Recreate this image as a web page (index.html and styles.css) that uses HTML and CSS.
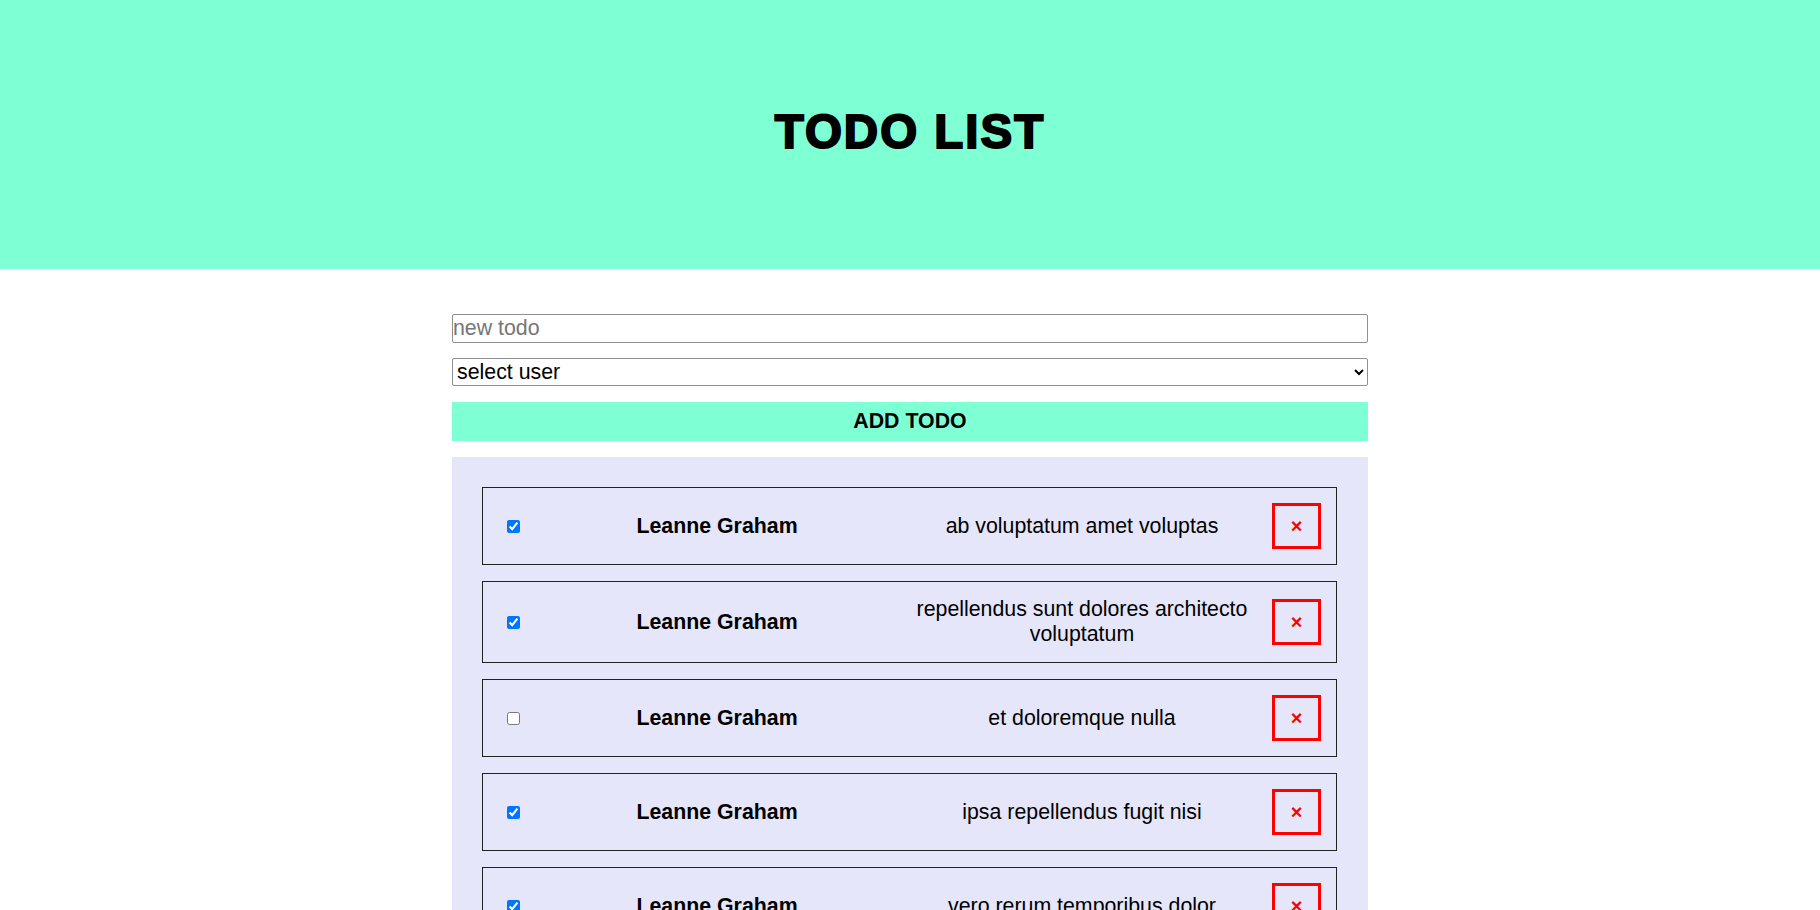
FILE: index.html
```html
<!DOCTYPE html>
<html lang="en">
<head>
<meta charset="utf-8">
<title>Todo List</title>
<link rel="stylesheet" href="styles.css">
</head>
<body>
<header class="header">
  <h1 class="title">TODO LIST</h1>
</header>
<main class="main">
  <form class="form">
    <input class="new-todo" type="text" placeholder="new todo">
    <select class="user-select">
      <option>select user</option>
      <option>Leanne Graham</option>
    </select>
    <button class="add-btn" type="button">ADD TODO</button>
  </form>
  <ul class="list">
    <li class="item">
      <span class="check-cell"><input type="checkbox" checked></span>
      <span class="name">Leanne Graham</span>
      <span class="text">ab voluptatum amet voluptas</span>
      <span class="del-cell"><button class="del" type="button">×</button></span>
    </li>
    <li class="item">
      <span class="check-cell"><input type="checkbox" checked></span>
      <span class="name">Leanne Graham</span>
      <span class="text">repellendus sunt dolores architecto voluptatum</span>
      <span class="del-cell"><button class="del" type="button">×</button></span>
    </li>
    <li class="item">
      <span class="check-cell"><input type="checkbox"></span>
      <span class="name">Leanne Graham</span>
      <span class="text">et doloremque nulla</span>
      <span class="del-cell"><button class="del" type="button">×</button></span>
    </li>
    <li class="item">
      <span class="check-cell"><input type="checkbox" checked></span>
      <span class="name">Leanne Graham</span>
      <span class="text">ipsa repellendus fugit nisi</span>
      <span class="del-cell"><button class="del" type="button">×</button></span>
    </li>
    <li class="item">
      <span class="check-cell"><input type="checkbox" checked></span>
      <span class="name">Leanne Graham</span>
      <span class="text">vero rerum temporibus dolor</span>
      <span class="del-cell"><button class="del" type="button">×</button></span>
    </li>
  </ul>
</main>
</body>
</html>
```
FILE: styles.css
```css
html {
  overflow: hidden;
}
body {
  margin: 0;
  font-family: "Liberation Sans", Arial, sans-serif;
  background: #ffffff;
  color: #000;
}
.header {
  height: 269px;
  background: #7fffd4;
  display: flex;
  align-items: center;
  justify-content: center;
  padding-bottom: 6px;
  box-sizing: border-box;
}
.title {
  margin: 0;
  font-size: 47.5px;
  font-weight: 700;
  letter-spacing: 2px;
  -webkit-text-stroke: 2px #000;
}
.main {
  width: 916px;
  margin: 45px auto 0;
}
.form {
  display: flex;
  flex-direction: column;
  gap: 15px;
}
.new-todo {
  box-sizing: border-box;
  width: 100%;
  height: 29px;
  margin: 0;
  padding: 1px 0;
  font-family: "Liberation Sans", Arial, sans-serif;
  font-size: 21.33px;
  border: 1px solid #8f8f8f;
  border-radius: 2px;
}
.new-todo::placeholder {
  color: #767676;
}
.user-select {
  box-sizing: border-box;
  width: 100%;
  height: 28px;
  margin: 0;
  font-family: "Liberation Sans", Arial, sans-serif;
  font-size: 21.33px;
  border: 1px solid #8f8f8f;
  border-radius: 2px;
  background: #fff;
  color: #000;
}
.add-btn {
  margin-top: 1px;
  height: 39px;
  width: 100%;
  border: none;
  background: #7fffd4;
  font-family: "Liberation Sans", Arial, sans-serif;
  font-size: 21.33px;
  font-weight: 700;
  color: #000;
}
.list {
  list-style: none;
  margin: 16px 0 0;
  padding: 30px 31px 30px 30px;
  background: #e6e6fa;
  display: flex;
  flex-direction: column;
  gap: 16px;
}
.item {
  display: grid;
  grid-template-columns: 37px 354px 376px 1fr;
  align-items: center;
  border: 1px solid #222;
  padding: 15px 15px 15px 20px;
  font-size: 21.33px;
}
.check-cell {
  display: flex;
  align-items: center;
}
.check-cell input {
  margin: 0 0 0 4px;
  width: 13px;
  height: 13px;
}
.name {
  font-weight: 700;
  text-align: center;
}
.text {
  text-align: center;
}
.del-cell {
  display: flex;
  justify-content: flex-end;
}
.del {
  width: 49px;
  height: 46px;
  box-sizing: border-box;
  border: 3px solid #ff0000;
  background: transparent;
  color: #ff0000;
  font-family: "Liberation Sans", Arial, sans-serif;
  font-size: 20px;
  font-weight: 700;
  padding: 0;
  line-height: 1;
}
```
